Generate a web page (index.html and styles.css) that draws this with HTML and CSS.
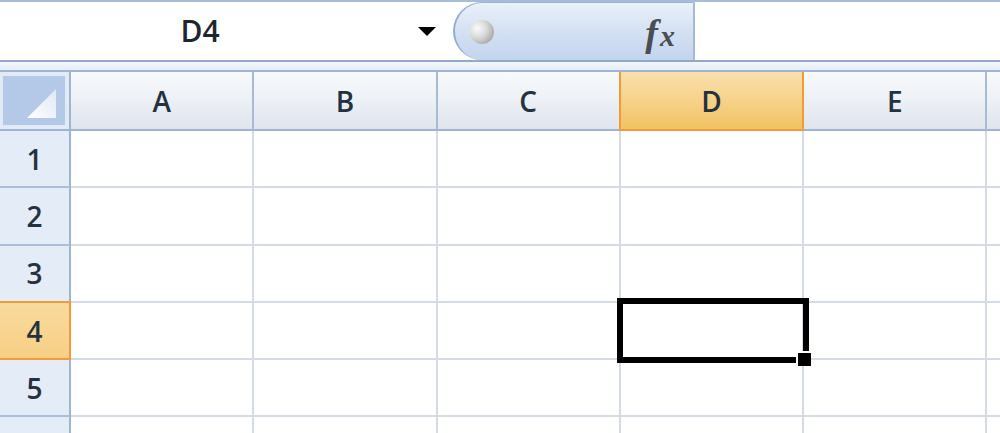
FILE: index.html
```html
<!DOCTYPE html>
<html>
<head>
<meta charset="utf-8">
<link rel="stylesheet" href="styles.css">
</head>
<body>
<div class="app">
  <div class="formula-bar">
    <div class="namebox">
      <span class="name">D4</span>
      <span class="arrow"></span>
    </div>
    <div class="fxbox">
      <span class="orb"></span>
      <span class="fx"><i class="fx-f">f</i><i class="fx-x">x</i></span>
    </div>
    <div class="input"></div>
  </div>
  <div class="gap"></div>
  <div class="sheet">
    <div class="corner">
      <div class="corner-inner">
        <svg width="60" height="49" viewBox="0 0 60 49">
          <defs>
            <linearGradient id="tri" x1="0" y1="1" x2="1" y2="0">
              <stop offset="0" stop-color="#ffffff"/>
              <stop offset="1" stop-color="#dfe8f6"/>
            </linearGradient>
          </defs>
          <polygon points="53,13 53,42 24,42" fill="url(#tri)"/>
        </svg>
      </div>
    </div>
    <div class="colhead">A</div>
    <div class="colhead">B</div>
    <div class="colhead">C</div>
    <div class="colhead colhead-sel">D</div>
    <div class="colhead">E</div>
    <div class="colhead"></div>

    <div class="rowhead">1</div>
    <div class="cell"></div><div class="cell"></div><div class="cell"></div><div class="cell"></div><div class="cell"></div><div class="cell"></div>

    <div class="rowhead">2</div>
    <div class="cell"></div><div class="cell"></div><div class="cell"></div><div class="cell"></div><div class="cell"></div><div class="cell"></div>

    <div class="rowhead">3</div>
    <div class="cell"></div><div class="cell"></div><div class="cell"></div><div class="cell"></div><div class="cell"></div><div class="cell"></div>

    <div class="rowhead rowhead-sel">4</div>
    <div class="cell"></div><div class="cell"></div><div class="cell"></div>
    <div class="cell cell-active"><span class="sel"></span><span class="handle"></span></div>
    <div class="cell"></div><div class="cell"></div>

    <div class="rowhead">5</div>
    <div class="cell"></div><div class="cell"></div><div class="cell"></div><div class="cell"></div><div class="cell"></div><div class="cell"></div>

    <div class="rowhead"></div>
    <div class="cell"></div><div class="cell"></div><div class="cell"></div><div class="cell"></div><div class="cell"></div><div class="cell"></div>
  </div>
</div>
</body>
</html>
```
FILE: styles.css
```css
* { box-sizing: border-box; }

html, body {
  margin: 0;
  padding: 0;
  background: #ffffff;
}

.app {
  width: 1000px;
  height: 433px;
  overflow: hidden;
  font-family: "Open Sans", "Noto Sans", sans-serif;
  color: #24323f;
}

/* ---------- formula bar ---------- */
.formula-bar {
  display: flex;
  height: 62px;
  border-top: 2px solid #a7bcd8;
  border-bottom: 2px solid #90aacb;
  background: #ffffff;
}

.namebox {
  width: 453px;
  display: flex;
  align-items: center;
}

.name {
  width: 400px;
  text-align: center;
  font-size: 30px;
  font-weight: 600;
  line-height: 1;
  color: #1d2630;
}

.arrow {
  margin-left: 18px;
  width: 0;
  height: 0;
  border-left: 9px solid transparent;
  border-right: 9px solid transparent;
  border-top: 9px solid #000;
}

.fxbox {
  width: 242px;
  display: flex;
  align-items: center;
  justify-content: space-between;
  padding: 0 18px 0 15px;
  border-radius: 29px 0 0 29px;
  border-top: 1px solid #9bb4d6;
  border-left: 2px solid #91acd1;
  border-right: 2px solid #a3b9d6;
  background: linear-gradient(#eaf1fa 0%, #dae5f5 35%, #c3d4ed 100%);
}

.orb {
  width: 24px;
  height: 24px;
  border-radius: 50%;
  background: radial-gradient(circle at 30% 35%, #fbfbfb 0%, #dadada 40%, #a0a0a0 85%, #8a8a8a 100%);
}

.fx {
  font-family: "Liberation Serif", "DejaVu Serif", serif;
  font-weight: bold;
  color: #4a4d52;
  line-height: 1;
  display: flex;
  align-items: baseline;
  margin-top: 2px;
}

.fx-f {
  font-size: 38px;
}

.fx-x {
  font-size: 30px;
  margin-left: 2px;
}

.input {
  flex: 1;
  background: #ffffff;
}

.gap {
  height: 8px;
  background: linear-gradient(#f3f6fb, #e6edf7);
}

/* ---------- sheet ---------- */
.sheet {
  display: grid;
  grid-template-columns: 71px repeat(6, 183.3px);
  grid-template-rows: 59px repeat(6, 57.3px);
  border-top: 2px solid #9db4d2;
}

.corner {
  padding: 4px 4px 4px 3px;
  background: #e2eaf6;
  border-right: 2px solid #9db4d2;
  border-bottom: 2px solid #9db4d2;
}

.corner-inner {
  width: 100%;
  height: 100%;
  background: #b4c8e8;
}

.corner-inner svg {
  display: block;
}

.colhead {
  display: flex;
  align-items: center;
  justify-content: center;
  font-size: 28px;
  font-weight: 600;
  background: linear-gradient(#f8fafc 0%, #eef1f6 45%, #dfe5ee 100%);
  border-right: 2px solid #a6bbd5;
  border-bottom: 2px solid #9db4d2;
}

.colhead-sel {
  background: linear-gradient(#fae0ad 0%, #f7d38d 45%, #f1c262 100%);
  border-right-color: #f19a38;
  border-bottom-color: #f19a38;
  box-shadow: -2px 0 0 #f19a38;
}

.rowhead {
  display: flex;
  align-items: center;
  justify-content: center;
  font-size: 28px;
  font-weight: 600;
  background: #e4ecf7;
  border-right: 2px solid #9db4d2;
  border-bottom: 2px solid #a9bfd9;
}

.rowhead-sel {
  background: linear-gradient(#f9da9e, #f7cf85);
  border-right-color: #f19a38;
  border-bottom-color: #f19a38;
  box-shadow: 0 -2px 0 #f19a38;
}

.cell {
  background: #ffffff;
  border-right: 2px solid #d4dbe7;
  border-bottom: 2px solid #d4dbe7;
}

.cell-active {
  position: relative;
}

.sel {
  position: absolute;
  left: -4px;
  top: -5px;
  right: -7px;
  bottom: -5px;
  border: 6px solid #000;
}

.handle {
  position: absolute;
  right: -9px;
  bottom: -8px;
  width: 15px;
  height: 15px;
  background: #000;
  border-top: 2px solid #fff;
  border-left: 2px solid #fff;
}
```
